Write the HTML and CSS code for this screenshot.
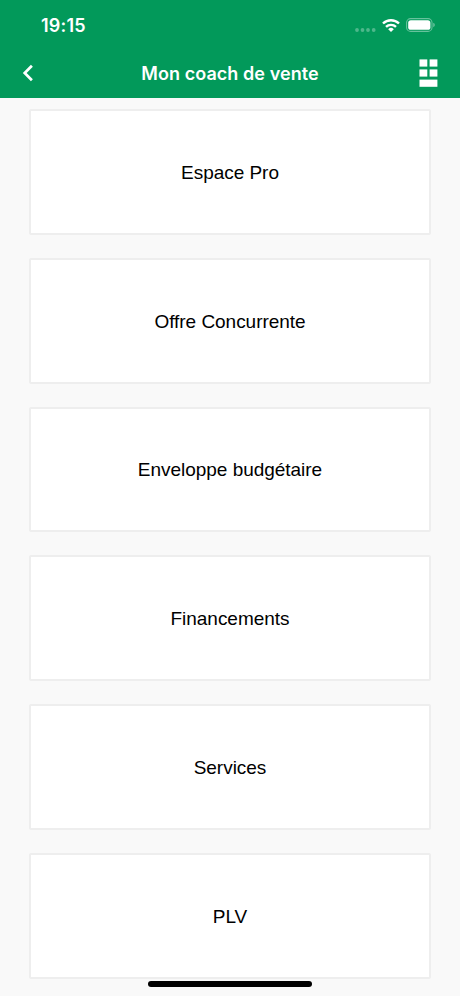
FILE: index.html
```html
<!DOCTYPE html>
<html lang="fr">
<head>
  <meta charset="UTF-8">
  <meta name="viewport" content="width=device-width, initial-scale=1.0">
  <title>Mon coach de vente</title>
  <link rel="stylesheet" href="styles.css">
</head>
<body>
  <header class="header">
    <div class="status-bar">
      <span class="time">19:15</span>
      <div class="status-icons">
        <svg class="signal" width="21" height="4" viewBox="0 0 21 4">
          <circle cx="2" cy="2" r="1.9"/>
          <circle cx="7.5" cy="2" r="1.9"/>
          <circle cx="13" cy="2" r="1.9"/>
          <circle cx="18.7" cy="2" r="1.9"/>
        </svg>
        <svg class="wifi" width="18" height="13" viewBox="0 0 18 13">
          <path d="M1 4.5a11.4 11.4 0 0 1 16 0M4 7.9a7.1 7.1 0 0 1 10 0" fill="none" stroke="#fff" stroke-width="2.4"/>
          <path d="M9 13 6.2 10.2a4 4 0 0 1 5.6 0z" fill="#fff"/>
        </svg>
        <svg class="battery" width="30" height="14" viewBox="0 0 30 14">
          <rect x=".6" y=".6" width="25.4" height="12.8" rx="4" fill="none" stroke="#fff" stroke-opacity=".4" stroke-width="1.1"/>
          <rect x="2.2" y="2.2" width="22.2" height="9.6" rx="2.6" fill="#fff"/>
          <path d="M27.3 4.8a2.4 2.4 0 0 1 0 4.4z" fill="#fff" fill-opacity=".45"/>
        </svg>
      </div>
    </div>
    <nav class="nav-bar">
      <button class="nav-button" aria-label="Retour">
        <svg width="12" height="18" viewBox="0 0 12 18">
          <path d="M9.9 1.7 2.7 9l7.2 7.3" fill="none" stroke="#fff" stroke-width="2.7"/>
        </svg>
      </button>
      <h1 class="title">Mon coach de vente</h1>
      <button class="nav-button menu" aria-label="Menu">
        <svg width="19" height="28" viewBox="0 0 19 28" fill="#fff">
          <rect x=".5" y=".4" width="7.8" height="7.2"/>
          <rect x="10.6" y=".4" width="7.8" height="7.2"/>
          <rect x=".5" y="10.4" width="7.8" height="7.2"/>
          <rect x="10.6" y="10.4" width="7.8" height="7.2"/>
          <rect x=".5" y="20.6" width="17.9" height="7.2"/>
        </svg>
      </button>
    </nav>
  </header>
  <main class="list">
    <a class="card">Espace Pro</a>
    <a class="card">Offre Concurrente</a>
    <a class="card">Enveloppe budgétaire</a>
    <a class="card">Financements</a>
    <a class="card">Services</a>
    <a class="card">PLV</a>
  </main>
  <div class="home-indicator"></div>
</body>
</html>
```
FILE: styles.css
```css
* {
  box-sizing: border-box;
}

body {
  margin: 0;
  height: 996px;
  overflow: hidden;
  background-color: #f9f9f9;
  font-family: "Liberation Sans", Arial, sans-serif;
  color: #000;
}

.header {
  height: 98px;
  background-color: #02995a;
  color: #fff;
  font-family: Inter, sans-serif;
}

.status-bar {
  display: flex;
  justify-content: space-between;
  height: 48px;
  padding: 14px 24px 0 41px;
}

.time {
  font-size: 18px;
  font-weight: 600;
  line-height: 24px;
  letter-spacing: 0.2px;
}

.status-icons {
  display: flex;
  align-items: center;
  height: 22px;
}

.signal {
  margin: 9px 6px 0 0;
  fill: #fff;
  fill-opacity: 0.3;
}

.wifi {
  margin-right: 6px;
}

.nav-bar {
  display: flex;
  justify-content: space-between;
  align-items: center;
  height: 50px;
  padding: 0 22px;
}

.nav-button {
  display: flex;
  width: 19px;
  padding: 0;
  border: none;
  background: none;
}

.menu {
  justify-content: flex-end;
}

.title {
  margin: 0;
  padding-top: 1px;
  font-size: 18px;
  font-weight: 600;
  letter-spacing: 0.07px;
}

.list {
  display: flex;
  flex-direction: column;
  gap: 23px;
  padding: 11px 29px 0;
}

.card {
  display: flex;
  flex-shrink: 0;
  justify-content: center;
  align-items: center;
  height: 125.8px;
  padding-top: 2px;
  border: 2px solid #eee;
  border-radius: 2px;
  background-color: #fff;
  font-size: 19px;
  letter-spacing: -0.03px;
}

.home-indicator {
  position: fixed;
  bottom: 9px;
  left: 148px;
  width: 164px;
  height: 6px;
  border-radius: 3px;
  background-color: #000;
}
```
